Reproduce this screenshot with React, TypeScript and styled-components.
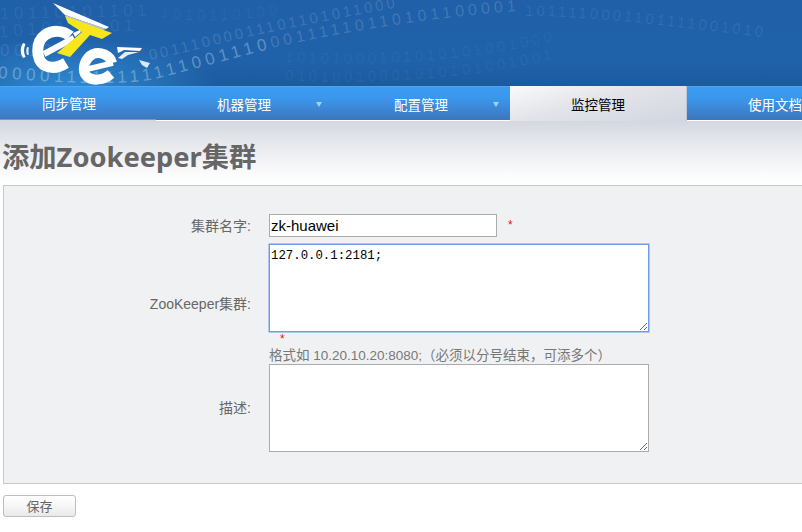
import React from "react";
import styled, { createGlobalStyle } from "styled-components";

const Global = createGlobalStyle`
  html, body { margin: 0; padding: 0; background: #fff; overflow: hidden; }
  body { font-family: "Liberation Sans", "Noto Sans CJK SC", sans-serif; }
  * { box-sizing: border-box; }
`;

const Page = styled.div`
  width: 802px;
  height: 532px;
  overflow: hidden;
  display: flex;
  flex-direction: column;
`;

const Banner = styled.header`
  height: 86px;
  flex: none;
  background:
    radial-gradient(ellipse 150px 55px at 70px 92px, #2f8fd6 0%, rgba(47,143,214,0) 100%),
    linear-gradient(#1f60a8, #2062aa 70%, #1c5a9e);
  overflow: hidden;
`;

const BannerArt = styled.svg`
  display: block;
  width: 802px;
  height: 86px;
`;

const Digits = styled.text<{ $o: number; $s: number; $g?: number }>`
  font-family: "Liberation Sans", sans-serif;
  font-size: ${(p) => p.$s}px;
  letter-spacing: ${(p) => p.$g ?? 3}px;
  fill: #ffffff;
  fill-opacity: ${(p) => p.$o};
`;

const Nav = styled.nav`
  display: flex;
  height: 35px;
  flex: none;
  overflow: hidden;
  background: #d3d7df;
`;

const Tab = styled.div<{ $active?: boolean; $first?: boolean; $w: number }>`
  position: relative;
  flex: none;
  width: ${(p) => p.$w}px;
  height: 35px;
  display: flex;
  align-items: center;
  justify-content: ${(p) => (p.$first ? "flex-start" : "center")};
  padding-left: ${(p) => (p.$first ? 42 : 0)}px;
  padding-right: ${(p) => (p.$active ? 0 : 1)}px;
  padding-top: ${(p) => (p.$first ? 0 : 1)}px;
  padding-bottom: ${(p) => (p.$first ? 1 : 0)}px;
  font-size: 13.5px;
  color: ${(p) => (p.$active ? "#000" : "#fff")};
  background: ${(p) =>
    p.$active
      ? "linear-gradient(165deg, #fafafa 0%, #e2e4e9 45%, #d2d6df 100%)"
      : "linear-gradient(#3c9df2 0%, #3a97ec 35%, #3f79c2 90%, #3d74bb 100%)"};
  box-shadow: ${(p) =>
    p.$active
      ? "none"
      : p.$first
        ? "inset 0 1px 0 #4aa6f0, inset 0 -1px 0 #d3d7df, inset 0 -2px 0 #6c9bd6"
        : "inset 0 1px 0 #4aa6f0, inset 0 -1px 0 #ffffff"};
  border-right: ${(p) => (p.$active ? "1px solid #bcc6d6" : "none")};
`;

const Caret = styled.i`
  position: absolute;
  right: 11px;
  top: 16px;
  width: 0;
  height: 0;
  border-left: 3.5px solid transparent;
  border-right: 3.5px solid transparent;
  border-top: 5px solid #9fd0f5;
`;

const TitleBand = styled.div`
  height: 64px;
  flex: none;
  padding-left: 3px;
  display: flex;
  align-items: flex-start;
  background: linear-gradient(#d3d7df 0%, #e6e8ec 35%, #fbfbfc 82%, #ffffff 100%);
`;

const Title = styled.h1`
  margin: 0;
  font-family: "Noto Sans", "Noto Sans CJK SC", sans-serif;
  font-weight: 700;
  font-size: 27.3px;
  line-height: 36px;
  padding-top: 18px;
  margin-left: -1px;
  color: #666;
`;

const Panel = styled.section`
  flex: none;
  margin-left: 3px;
  width: 810px;
  height: 299px;
  padding: 28px 0 31px;
  background: #f0f1f3;
  border: 1px solid #c8c8c8;
  display: grid;
  grid-template-columns: 265px 1fr;
  grid-template-rows: 30px 120px 88px;
  align-content: start;
`;

const Label = styled.label<{ $offset?: number }>`
  display: flex;
  align-items: center;
  justify-content: flex-end;
  padding-right: 18px;
  padding-bottom: ${(p) => p.$offset ?? 0}px;
  font-size: 14px;
  color: #666;
`;

const Field = styled.div`
  display: flex;
  flex-direction: column;
`;

const InlineField = styled.div`
  display: flex;
  align-items: flex-start;
`;

const TextInput = styled.input`
  width: 228px;
  height: 23px;
  margin: 0;
  padding: 0 1px;
  border: 1px solid #ababab;
  border-radius: 0;
  background: #fff;
  color: #000;
  font-family: "Liberation Sans", sans-serif;
  font-size: 15px;
  outline: none;
`;

const Area = styled.textarea<{ $focus?: boolean }>`
  display: block;
  width: 380px;
  height: 88px;
  margin: 0;
  padding: 3px 1px 2px;
  border: 1px solid ${(p) => (p.$focus ? "#6f9ce8" : "#ababab")};
  box-shadow: ${(p) => (p.$focus ? "0 0 0 0.5px #6f9ce8" : "none")};
  border-radius: 0;
  background: #fff;
  color: #000;
  font-family: "Liberation Mono", monospace;
  font-size: 12.35px;
  line-height: 17px;
  outline: none;
`;

const Star = styled.span<{ $block?: boolean }>`
  color: #e8141c;
  font-size: 12px;
  line-height: 14px;
  height: 14px;
  margin-left: 11px;
  margin-top: ${(p) => (p.$block ? 0 : 4)}px;
`;

const Hint = styled.div`
  font-size: 13.5px;
  line-height: 20px;
  height: 18px;
  color: #777;
  white-space: nowrap;
`;

const Footer = styled.div`
  padding: 11px 0 0 3px;
`;

const SaveButton = styled.button`
  display: block;
  width: 73px;
  height: 22px;
  padding: 0;
  border: 1px solid #bdbdbd;
  border-radius: 3px;
  background: linear-gradient(#ffffff 0%, #f6f6f6 50%, #e9e9e9 100%);
  font-family: "Noto Sans CJK SC", sans-serif;
  font-size: 13px;
  line-height: 18px;
  color: #666;
`;

function BannerGraphic() {
  return (
    <BannerArt viewBox="0 0 802 86">
      <defs>
        <path id="p1" d="M-2 78 C50 82 110 86 150 80 C200 68 240 56 270 49" />
        <path id="p1c" d="M272 48 C340 32 440 16 530 10" />
        <path id="p1b" d="M525 16 C580 16 640 22 770 38" />
        <path id="p2" d="M150 60 C190 52 230 40 280 30 C330 20 380 10 440 0" />
        <path id="p4" d="M285 62 C340 66 440 64 520 48 C560 40 590 34 625 28" />
        <path id="p5" d="M285 80 C340 84 440 82 520 66 C560 58 590 50 640 44" />
        <path id="p7" d="M0 19 L150 16" />
        <path id="p8" d="M0 38 C40 32 100 32 170 30" />
        <path id="p9" d="M0 56 L70 56" />
        <path id="p10" d="M160 17 C210 24 250 20 330 6" />
      </defs>
      <Digits $o={0.3} $s={17} $g={4.5}><textPath href="#p1">{"000011111111111001110000"}</textPath></Digits>
      <Digits $o={0.16} $s={16} $g={4}><textPath href="#p1c">{"00111110110101100001"}</textPath></Digits>
      <Digits $o={0.09} $s={15} $g={3}><textPath href="#p1b">{"1011110001101111001010"}</textPath></Digits>
      <Digits $o={0.14} $s={15} $g={3}><textPath href="#p2">{"00111000011101101011000"}</textPath></Digits>
      <Digits $o={0.06} $s={15} $g={3.5}><textPath href="#p4">{"10101000101010101001000"}</textPath></Digits>
      <Digits $o={0.06} $s={15} $g={3.5}><textPath href="#p5">{"01010010001010101001001"}</textPath></Digits>
      <Digits $o={0.08} $s={17} $g={4.5}><textPath href="#p7">{"10110101101"}</textPath></Digits>
      <Digits $o={0.08} $s={17} $g={4.5}><textPath href="#p8">{"1010110101"}</textPath></Digits>
      <Digits $o={0.1} $s={17} $g={4.5}><textPath href="#p9">{"0010"}</textPath></Digits>
      <Digits $o={0.06} $s={15} $g={4}><textPath href="#p10">{"1010110100"}</textPath></Digits>

      {/* signal arcs */}
      <path d="M23 43 C20 48 20 53 23 58 L25.5 57 C23.5 53 23.5 48 25.5 44Z" fill="#fff" />
      <path d="M27 47 C26 50 26 52 27 55 L29 54.5 C28.3 52 28.3 50 29 47.5Z" fill="#e3ecf6" />
      {/* big e: ring and thinner bar */}
      <path
        d="M70 36 C63 30 52 30 45 35 C35 42 36 59 44 65 C51 69 58 68 66 63"
        fill="none"
        stroke="#fff"
        strokeWidth="11"
      />
      <path d="M44 54 L74 38" fill="none" stroke="#fff" strokeWidth="6" />
      {/* top white wing */}
      <path d="M53 3 L109 27 L106 29 L65 15 L63 13Z" fill="#fff" />
      <path d="M65 15 L106 29 L103 30 L66 17Z" fill="#b9c6d6" />
      {/* yellow T */}
      <path d="M65 16 L112 33 L102 39 L90 35 L70 57 L57 53 L82 32 L68 23Z" fill="#f7e61c" />
      <path d="M73 33 L80 30 L81 32 L75 37Z" fill="#fff" />
      {/* second e: ring and thinner bar */}
      <path
        d="M112 63 C110 55 100 51 93 54 C85 58 82 68 85 74 C90 82 103 81 111 74"
        fill="none"
        stroke="#fff"
        strokeWidth="10"
      />
      <path d="M88 69 L113 63" fill="none" stroke="#fff" strokeWidth="5.5" />
      {/* wing right */}
      <path d="M117 47 L142 48 L140 51 L124 50 L118 53Z" fill="#fff" />
      <path d="M118 58 L125 52 L139 52 L128 55 L122 59Z" fill="#e8eef5" />
      <path d="M139 60 L150 63 L147 68 L142 65Z" fill="#d5ebfa" />
    </BannerArt>
  );
}

export default function App() {
  return (
    <Page>
      <Global />
      <Banner>
        <BannerGraphic />
      </Banner>
      <Nav>
        <Tab $first $w={156}>同步管理</Tab>
        <Tab $w={177}>
          机器管理
          <Caret />
        </Tab>
        <Tab $w={177}>
          配置管理
          <Caret />
        </Tab>
        <Tab $active $w={177}>监控管理</Tab>
        <Tab $w={177}>使用文档</Tab>
      </Nav>
      <TitleBand>
        <Title>添加Zookeeper集群</Title>
      </TitleBand>
      <Panel>
        <Label $offset={9}>集群名字:</Label>
        <InlineField>
          <TextInput readOnly value="zk-huawei" />
          <Star>*</Star>
        </InlineField>
        <Label $offset={3}>ZooKeeper集群:</Label>
        <Field>
          <Area $focus readOnly value="127.0.0.1:2181;" />
          <Star $block>*</Star>
          <Hint>格式如 10.20.10.20:8080;（必须以分号结束，可添多个）</Hint>
        </Field>
        <Label $offset={2}>描述:</Label>
        <Field>
          <Area readOnly value="" />
        </Field>
      </Panel>
      <Footer>
        <SaveButton>保存</SaveButton>
      </Footer>
    </Page>
  );
}
